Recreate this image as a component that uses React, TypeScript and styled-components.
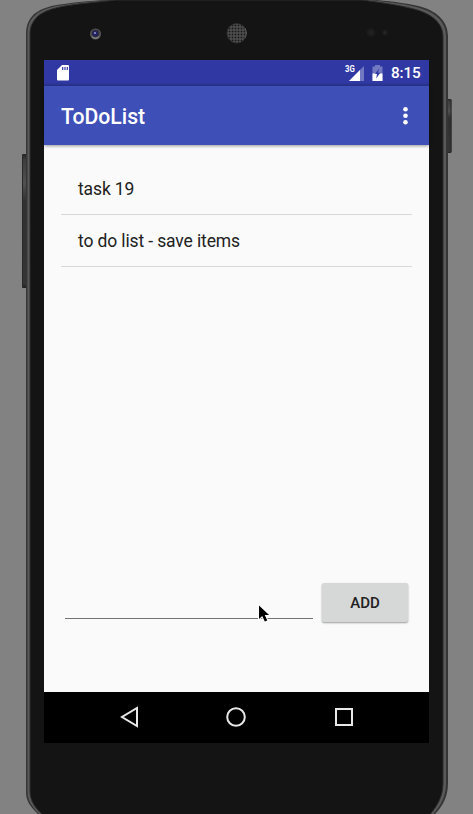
import React from "react";
import styled, { createGlobalStyle } from "styled-components";

const GlobalStyle = createGlobalStyle`
  *, *::before, *::after { box-sizing: border-box; }
  body { margin: 0; background: #828282; overflow: hidden; }
`;

const Stage = styled.div`
  position: relative;
  width: 473px;
  height: 814px;
  overflow: hidden;
  background: #828282;
  font-family: Roboto, "Noto Sans", sans-serif;
`;

const DeviceArt = styled.svg`
  position: absolute;
  inset: 0;
  display: block;
`;

const Screen = styled.main`
  position: relative;
  width: 385px;
  height: 683px;
  margin: 60px 0 0 44px;
  display: flex;
  flex-direction: column;
  background: #fafafa;
`;

const StatusBar = styled.div`
  height: 26px;
  flex: none;
  display: flex;
  align-items: center;
  justify-content: space-between;
  padding: 0 8px 0 13px;
  background: linear-gradient(#3039a3 0 23px, #2b3592 24px 26px);
`;

const StatusGroup = styled.div`
  display: flex;
  align-items: center;
`;

const BatteryIcon = styled.svg`
  margin-left: 8px;
`;

const Clock = styled.time`
  width: 30px;
  margin-left: 8px;
  color: #fff;
  font-size: 15.3px;
  font-weight: 500;
  line-height: 27px;
  letter-spacing: -0.15px;
  white-space: nowrap;
`;

const NetworkLabel = styled.span`
  width: 10px;
  height: 16px;
  margin-right: -6px;
  color: #fff;
  font-size: 9px;
  font-weight: 700;
  line-height: 9px;
  transform: scaleX(0.86);
  transform-origin: left;
`;

const AppBar = styled.header`
  position: relative;
  height: 59px;
  flex: none;
  display: flex;
  align-items: center;
  justify-content: space-between;
  padding: 2px 16px 0 17px;
  background: #3e4fb8;
  box-shadow: 0 1px 3px rgba(0, 0, 0, 0.4);
`;

const Title = styled.h1`
  margin: 0;
  color: #fff;
  font-size: 21.2px;
  font-weight: 500;
  line-height: 28px;
`;

const IconButton = styled.button`
  display: flex;
  padding: 0;
  border: 0;
  background: none;
`;

const Content = styled.section`
  flex: 1;
  display: flex;
  flex-direction: column;
  justify-content: space-between;
  padding: 18px 17px 69px;
`;

const TaskList = styled.ul`
  margin: 0;
  padding: 0;
  list-style: none;
`;

const Task = styled.li`
  height: 52px;
  padding-left: 17px;
  border-bottom: 1px solid #d8d8d8;
  color: #212121;
  font-size: 17.5px;
  line-height: 52px;
  letter-spacing: -0.13px;
`;

const EntryRow = styled.form`
  display: flex;
  align-items: flex-end;
  padding: 0 4px;
`;

const TaskInput = styled.input`
  width: 248px;
  height: 36px;
  margin: 0 9px 4px 0;
  padding: 0;
  border: 0;
  border-bottom: 1px solid #737373;
  outline: 0;
  background: transparent;
  color: #212121;
  font: 17px Roboto, sans-serif;
`;

const AddButton = styled.button`
  width: 86px;
  height: 39px;
  flex: none;
  margin-bottom: 1px;
  padding: 1px 0 0;
  border: 0;
  border-radius: 2px;
  background: #d6d7d7;
  box-shadow: 0 1px 2px rgba(0, 0, 0, 0.38);
  color: #212121;
  font: 500 15px Roboto, sans-serif;
`;

const NavBar = styled.nav`
  height: 51px;
  flex: none;
  display: flex;
  align-items: center;
  justify-content: space-between;
  padding: 0 75.5px 0.5px 75px;
  background: #000;
`;

const Pointer = styled.svg`
  position: absolute;
  left: 212px;
  top: 543px;
`;

const tasks = ["task 19", "to do list - save items"];

const outerShape =
  "M26 34C26 25 29 19 34 14C42 8 52 5 64 4C82 1 98 1 112 -1H366C388 1 408 3 422 7C438 12 448 22 448 36V783C448 798 442 808 431 818H42C32 808 26 803 26 792Z";
const midShape =
  "M27.5 34C27.5 25 30 20 36 14.5C43 9 52 6.5 64 5C82 2 98 1.5 114 -.5H364C387 2 407 4 421 8.5C437 13.5 446 23 446 36V783C446 797 440 808 429 818H44C33 808 27.5 802 27.5 791Z";
const faceShape =
  "M30 34C30 26 33 21 38 16C45 10.5 54 8 65 6C83 3 99 2 116 0H362C385 3 405 6 419 10.5C435 16 443 25 443 37V783C443 797 437 807 427 818H46C36 809 30 802 30 791Z";

function Device() {
  return (
    <DeviceArt width="473" height="814" viewBox="0 0 473 814" aria-hidden="true">
      <defs>
        <linearGradient id="sideKey" x1="0" y1="0" x2="0" y2="1">
          <stop offset="0" stopColor="#242424" />
          <stop offset=".04" stopColor="#3d3d3d" />
          <stop offset=".22" stopColor="#505050" />
          <stop offset=".36" stopColor="#303030" />
          <stop offset=".97" stopColor="#353535" />
          <stop offset="1" stopColor="#202020" />
        </linearGradient>
        <pattern id="mesh" width="3" height="3" patternUnits="userSpaceOnUse">
          <rect width="3" height="3" fill="#555" />
          <rect x=".6" y=".6" width="1.8" height="1.8" fill="#171717" />
        </pattern>
      </defs>
      <rect x="22" y="154" width="5" height="134" rx="1" fill="url(#sideKey)" />
      <path d="M22.5 156V287" stroke="#292929" />
      <rect x="447" y="99" width="4.5" height="54" rx="1" fill="url(#sideKey)" />
      <path d="M451 100V152" stroke="#292929" />
      <path d={outerShape} fill="#353535" />
      <path d={midShape} fill="#5a5a5a" />
      <path d={faceShape} fill="#141414" stroke="#2c2c2c" />
      <circle cx="95.5" cy="34" r="5.5" fill="#5a5a5a" />
      <circle cx="95.5" cy="33.5" r="4" fill="#30303c" />
      <circle cx="95.3" cy="33.5" r="2.5" fill="#20206a" />
      <circle cx="95" cy="33" r="1" fill="#9d9dcb" />
      <path d="M92 36.5Q95.5 40 99 36.5" fill="none" stroke="#999" />
      <circle cx="236.7" cy="33.3" r="9.8" fill="url(#mesh)" />
      <circle cx="236.7" cy="33.3" r="9.7" fill="none" stroke="#303030" strokeWidth=".8" />
      <path d="M245 28Q248 33 245 38" fill="none" stroke="#5b5b5b" />
      <circle cx="371" cy="32.5" r="4.3" fill="#1c1c1c" />
      <circle cx="371" cy="32.5" r="2" fill="#222" />
      <circle cx="385" cy="32.5" r="3" fill="#1c1c1c" />
      <circle cx="385" cy="32.5" r="1.5" fill="#252525" />
    </DeviceArt>
  );
}

export default function App() {
  return (
    <>
      <GlobalStyle />
      <Stage>
        <Device />
        <Screen>
          <StatusBar>
            <svg width="12" height="16" viewBox="0 0 12 16" aria-label="SD card">
              <path d="M5 0H11Q12 0 12 1V14Q12 15.5 11 15.5H1Q0 15.5 0 14V5Z" fill="#fff" />
              <path d="M5.7 2V5M8 2V5M10.3 2V5" stroke="#3039a3" strokeWidth="1.2" />
            </svg>
            <StatusGroup>
              <NetworkLabel>3G</NetworkLabel>
              <svg width="15" height="15" viewBox="0 0 15 15" aria-label="Signal">
                <path d="M0 15L15 0V15Z" fill="#7279c0" />
                <path d="M0 15L11 4V15Z" fill="#fff" />
              </svg>
              <BatteryIcon width="11" height="16" viewBox="0 0 11 16" aria-label="Battery charging">
                <path d="M3 0H8V1.5H10.5V16H.5V1.5H3Z" fill="#7279c0" />
                <path d="M.5 8.5H10.5V16H.5Z" fill="#fff" />
                <path d="M7 3.5L3 9H5L4.2 13.5L8.3 7.7H6Z" fill="#3039a3" />
              </BatteryIcon>
              <Clock>8:15</Clock>
            </StatusGroup>
          </StatusBar>
          <AppBar>
            <Title>ToDoList</Title>
            <IconButton aria-label="More options">
              <svg width="15" height="19" viewBox="0 0 15 19" fill="#fff">
                <circle cx="7.5" cy="2.3" r="2.3" />
                <circle cx="7.5" cy="8.8" r="2.3" />
                <circle cx="7.5" cy="15.3" r="2.3" />
              </svg>
            </IconButton>
          </AppBar>
          <Content>
            <TaskList>
              {tasks.map((task) => (
                <Task key={task}>{task}</Task>
              ))}
            </TaskList>
            <EntryRow onSubmit={(event) => event.preventDefault()}>
              <TaskInput aria-label="New task" />
              <AddButton>ADD</AddButton>
            </EntryRow>
          </Content>
          <NavBar>
            <IconButton aria-label="Back">
              <svg width="20" height="22" viewBox="0 0 20 22" fill="none" stroke="#e8e8e8" strokeWidth="2">
                <path d="M18 2V20L3 11Z" />
              </svg>
            </IconButton>
            <IconButton aria-label="Home">
              <svg width="22" height="22" viewBox="0 0 22 22" fill="none" stroke="#e8e8e8" strokeWidth="2">
                <circle cx="11" cy="11" r="8.8" />
              </svg>
            </IconButton>
            <IconButton aria-label="Recent apps">
              <svg width="20" height="20" viewBox="0 0 20 20" fill="none" stroke="#e8e8e8" strokeWidth="2">
                <path d="M2 2H18V18H2Z" />
              </svg>
            </IconButton>
          </NavBar>
          <Pointer width="18" height="22" viewBox="0 0 18 22" aria-hidden="true">
            <path
              d="M3 2.5V16L6.2 13L8.8 18.5L11.3 17.4L8.8 12H13.1Z"
              fill="#000"
              stroke="#fff"
              strokeWidth="2"
              paintOrder="stroke"
            />
          </Pointer>
        </Screen>
      </Stage>
    </>
  );
}
